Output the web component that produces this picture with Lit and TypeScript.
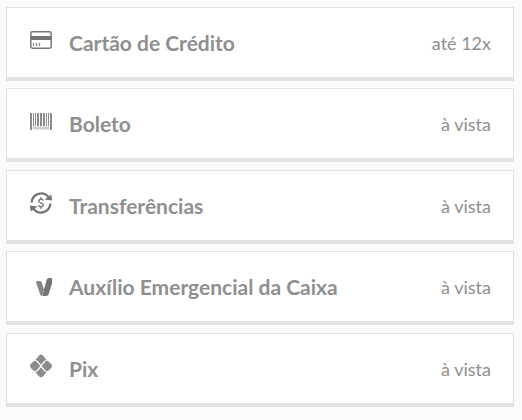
import { LitElement, html, svg, css } from "lit";
import { customElement, property } from "lit/decorators.js";

const icons: Record<string, unknown> = {
  card: svg`
    <rect x="0.8" y="3.8" width="20.4" height="16.4" rx="1.6" fill="none" stroke="#777" stroke-width="1.5" />
    <path d="M1 8h20v4H1z" fill="#757575" />
    <path d="M3.5 15v3M6.5 15v3M9.5 15v3" stroke="#888" stroke-width="1.3" />`,
  barcode: svg`
    <path d="M0 4h2v17H0zM3 4h1v13H3zM5 4h1v13H5zM7 4h2v13H7zM10 4h2v13h-2zM13 4h2v13h-2zM16 4h1v13h-1zM18 4h1v13h-1zM20 4h2v17h-2z" fill="#8c8c8c" />
    <g fill="none" stroke="#aaa" stroke-width="0.9">
      <circle cx="4.5" cy="19" r="1.2" /><circle cx="7.8" cy="19" r="1.2" />
      <circle cx="11.1" cy="19" r="1.2" /><circle cx="14.4" cy="19" r="1.2" />
      <circle cx="17.6" cy="19" r="1.2" />
    </g>`,
  transfer: svg`
    <g fill="none" stroke="#757575" stroke-width="2.3">
      <path d="M1.6 11.5A9.5 9.8 0 0 1 18.8 6.6" />
      <path d="M20.4 12.5A9.5 9.8 0 0 1 3.2 17.4" />
    </g>
    <path d="M21.2 3.6L22.2 9.6L14.6 8.6zM0.8 20.4L-0.2 14.4L7.4 15.4z" fill="#757575" />
    <path d="M13.3 9.6C12.8 7.8 8.9 7.7 8.8 10.1C8.7 12.4 13.4 11.4 13.3 14C13.1 16.4 8.8 16.2 8.5 14.2M11 6.2v2.2M11 15.6v2.2" fill="none" stroke="#7c7c7c" stroke-width="1.5" />`,
  caixa: svg`
    <path d="M6 10.4Q6.2 9 7.6 9H9.8Q11.2 9 11.7 10.4L14 17.5L12 23.8H11.4Q10.4 23.4 10 22z" fill="#868686" />
    <path d="M12.3 24L16.6 8Q17.2 6 19.3 6H21Q22 6 22 7.2V11.5L18.6 22.2Q18 24 16.2 24z" fill="#757575" />`,
  pix: svg`
    <g fill="#8c8c8c">
      <path d="M5.4 5.9L8.7 2Q11 -0.8 13.3 2L16.6 5.9Q14.8 6.2 13.7 7.6L11 10.7L8.3 7.6Q7.2 6.2 5.4 5.9z" />
      <path d="M5.4 18.1L8.7 22Q11 24.8 13.3 22L16.6 18.1Q14.8 17.8 13.7 16.4L11 13.3L8.3 16.4Q7.2 17.8 5.4 18.1z" />
      <path d="M4.4 6.8Q6.2 6.8 7.2 8.2L10.3 12L7.2 15.8Q6.2 17.2 4.4 17.2L1 14.2Q-1 12 1 9.8z" />
      <path d="M17.6 6.8Q15.8 6.8 14.8 8.2L11.7 12L14.8 15.8Q15.8 17.2 17.6 17.2L21 14.2Q23 12 21 9.8z" />
    </g>`,
};

@customElement("payment-option")
class PaymentOption extends LitElement {
  @property() icon = "";
  @property() label = "";
  @property() terms = "";

  static styles = css`
    :host {
      display: block;
    }
    .option {
      box-sizing: border-box;
      width: 100%;
      display: flex;
      align-items: center;
      padding: 20px 22px 20px 23px;
      border: 1px solid #e2e2e2;
      border-bottom-width: 4px;
      border-radius: 0;
      background: #fff;
      color: #8f8f8f;
      font-family: Lato, sans-serif;
      text-align: left;
      cursor: pointer;
    }
    .icon {
      flex: none;
      width: 22px;
      height: 24px;
      margin: 0 17px 5px 0;
      overflow: visible;
    }
    .label {
      flex: 1;
      font-size: 21px;
      line-height: 29px;
      font-weight: 700;
    }
    .terms {
      font-size: 18px;
      line-height: 24px;
    }
  `;

  render() {
    return html`<button class="option" type="button">
      <svg class="icon" viewBox="0 0 22 24" aria-hidden="true">${icons[this.icon]}</svg>
      <span class="label">${this.label}</span>
      <span class="terms">${this.terms}</span>
    </button>`;
  }
}

@customElement("app-root")
class AppRoot extends LitElement {
  static styles = css`
    :host {
      display: block;
      box-sizing: border-box;
      min-height: 100vh;
      padding: 7px 8px 7px 6px;
      background: #fbfbfb;
    }
    .options {
      list-style: none;
      margin: 0;
      padding: 0;
    }
    .item {
      margin-bottom: 7px;
    }
    .item:nth-child(even) {
      margin-bottom: 8px;
    }
  `;

  private methods = [
    { icon: "card", label: "Cartão de Crédito", terms: "até 12x" },
    { icon: "barcode", label: "Boleto", terms: "à vista" },
    { icon: "transfer", label: "Transferências", terms: "à vista" },
    { icon: "caixa", label: "Auxílio Emergencial da Caixa", terms: "à vista" },
    { icon: "pix", label: "Pix", terms: "à vista" },
  ];

  render() {
    return html`<ul class="options">
      ${this.methods.map(
        (m) => html`<li class="item">
          <payment-option .icon=${m.icon} .label=${m.label} .terms=${m.terms}></payment-option>
        </li>`
      )}
    </ul>`;
  }
}
